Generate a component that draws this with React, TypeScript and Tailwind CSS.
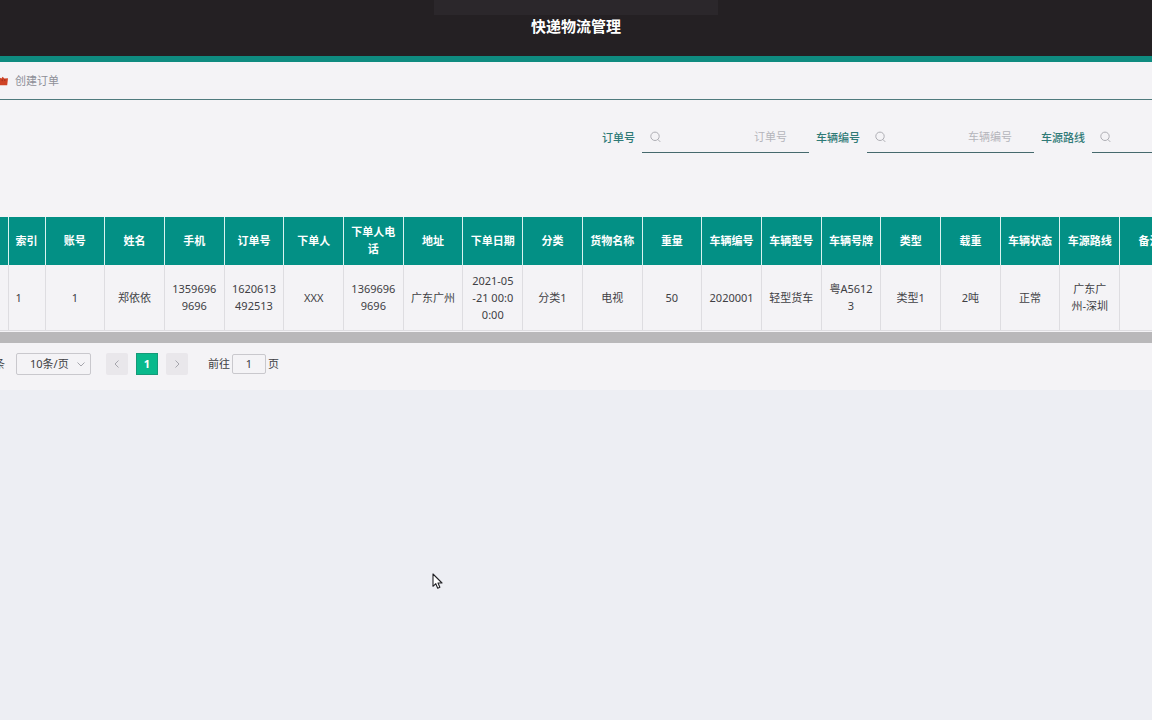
import { useState } from "react";

type Column = { title: string; value: string };

const columns: Column[] = [
  { title: "账号", value: "1" },
  { title: "姓名", value: "郑依依" },
  { title: "手机", value: "13596969696" },
  { title: "订单号", value: "1620613492513" },
  { title: "下单人", value: "XXX" },
  { title: "下单人电话", value: "13696969696" },
  { title: "地址", value: "广东广州" },
  { title: "下单日期", value: "2021-05\n-21 00:0\n0:00" },
  { title: "分类", value: "分类1" },
  { title: "货物名称", value: "电视" },
  { title: "重量", value: "50" },
  { title: "车辆编号", value: "2020001" },
  { title: "车辆型号", value: "轻型货车" },
  { title: "车辆号牌", value: "粤A56123" },
  { title: "类型", value: "类型1" },
  { title: "载重", value: "2吨" },
  { title: "车辆状态", value: "正常" },
  { title: "车源路线", value: "广东广\n州-深圳" },
  { title: "备注", value: "" },
];

const searchFields = ["订单号", "车辆编号", "车源路线"];

function SearchIcon() {
  return (
    <svg className="h-3 w-3 shrink-0" viewBox="0 0 12 12" fill="none" stroke="#aeaeb4" aria-hidden="true">
      <circle cx="5" cy="5.3" r="4.2" />
      <path d="M8 8.6 10 10.6" strokeLinecap="round" />
    </svg>
  );
}

function Chevron({ d }: { d: string }) {
  return (
    <svg className="h-3 w-3" viewBox="0 0 12 12" fill="none" stroke="#a5a5ac" aria-hidden="true">
      <path d={d} />
    </svg>
  );
}

function SearchField({ label }: { label: string }) {
  return (
    <div className="flex shrink-0 items-center gap-[7px]">
      <label htmlFor={label} className="font-medium text-[#2f7a76]">
        {label}
      </label>
      <div className="flex h-8 w-[167px] items-center border-b border-[#45696d] pr-[22px] pl-2">
        <SearchIcon />
        <input
          id={label}
          placeholder={label}
          className="min-w-0 flex-1 bg-transparent text-right outline-none placeholder:text-[#b5b5bb]"
        />
      </div>
    </div>
  );
}

export default function App() {
  const [page, setPage] = useState("1");

  return (
    <div className="relative min-h-screen overflow-hidden bg-[#edeef3] font-['Noto_Sans','Noto_Sans_CJK_SC',sans-serif] text-[11px] leading-[17px] text-[#404044]">
      <header className="relative flex h-[62px] items-center justify-center border-b-[6px] border-[#0f8b80] bg-[#242023] pb-1">
        <div className="absolute top-0 left-1/2 h-[15px] w-[284px] -translate-x-1/2 bg-[#2b272b]" />
        <h1 className="relative text-[15px] leading-5 font-bold text-white">快递物流管理</h1>
      </header>

      <main className="bg-[#f4f3f6]">
        <nav className="flex h-[38px] items-center gap-[7px] border-b border-[#4f7a7d]">
          <svg className="h-[10px] w-2 shrink-0" viewBox="0 0 8 10" aria-hidden="true">
            <path d="M0 1.8 1.4 2.4 2.6 .8 4.4 2.6 8 2.2 7.2 9.2H0Z" fill="#cf4325" />
            <path d="M2.2 3.4V5.2M4.8 3.2V5" stroke="#8e2b1c" strokeWidth=".8" />
          </svg>
          <a href="#create" className="text-[#8e8f98]">
            创建订单
          </a>
        </nav>

        <form className="flex gap-[7px] overflow-hidden pt-[21px] pl-[602px]">
          {searchFields.map((label) => (
            <SearchField key={label} label={label} />
          ))}
        </form>

        <div className="mt-16 overflow-hidden">
          <table className="w-[calc(100%+28px)] table-fixed border-collapse text-center">
            <colgroup>
              <col className="w-2" />
              <col className="w-[37px]" />
            </colgroup>
            <thead>
              <tr className="h-12 bg-[#039085] text-white">
                <th className="border-r border-[#d9f3f0]" />
                <th className="border-r border-[#d9f3f0] pb-[2px] text-center font-bold">索引</th>
                {columns.map((c) => (
                  <th key={c.title} className="border-r border-[#d9f3f0] px-[7px] pb-[2px] font-bold break-all">
                    {c.title}
                  </th>
                ))}
              </tr>
            </thead>
            <tbody>
              <tr className="h-[65px] border-b border-[#dedde1]">
                <td className="border-r border-[#dedde1]" />
                <td className="border-r border-[#dedde1] px-[7px] text-left">1</td>
                {columns.map((c) => (
                  <td key={c.title} className="border-r border-[#dedde1] px-[7px] break-all whitespace-pre-line">
                    {c.value}
                  </td>
                ))}
              </tr>
            </tbody>
          </table>
          <div className="mt-px h-[11px] bg-[#b9b8ba]" />
        </div>

        <div className="flex h-[47px] items-center pb-[5px]">
          <span className="-ml-[6px] w-[11px]">条</span>
          <div className="relative ml-[11px] flex items-center">
            <select
              aria-label="每页条数"
              className="h-[22px] w-[75px] appearance-none rounded-xs border border-[#c9c8cd] bg-transparent pl-[13px] outline-none"
            >
              <option>10条/页</option>
              <option>20条/页</option>
              <option>50条/页</option>
            </select>
            <span className="pointer-events-none absolute right-1">
              <Chevron d="M2.5 4.5 6 8 9.5 4.5" />
            </span>
          </div>
          <div className="ml-[15px] flex gap-2">
            <button type="button" aria-label="上一页" className="flex h-[22px] w-[22px] items-center justify-center rounded-xs bg-[#e9e7eb]">
              <Chevron d="M7.5 2.5 4 6 7.5 9.5" />
            </button>
            <button type="button" className="h-[22px] w-[22px] border border-[#159a78] bg-[#09b98c] leading-5 font-bold text-white">
              1
            </button>
            <button type="button" aria-label="下一页" className="flex h-[22px] w-[22px] items-center justify-center rounded-xs bg-[#e9e7eb]">
              <Chevron d="M4.5 2.5 8 6 4.5 9.5" />
            </button>
          </div>
          <label className="ml-5 flex items-center gap-[2px]">
            前往
            <input
              value={page}
              onChange={(e) => setPage(e.target.value)}
              className="h-5 w-[34px] rounded-xs border border-[#c9c8cd] bg-transparent text-center outline-none"
            />
            页
          </label>
        </div>
      </main>

      <svg className="pointer-events-none absolute top-[573px] left-[432px] h-[17px] w-3" viewBox="0 0 12 17" aria-hidden="true">
        <path
          d="M1 1V13.3L3.8 10.7 5.7 15.2 7.9 14.3 6 10H10Z"
          fill="#fff"
          stroke="#222226"
          strokeWidth="1.1"
          strokeLinejoin="round"
        />
      </svg>
    </div>
  );
}
